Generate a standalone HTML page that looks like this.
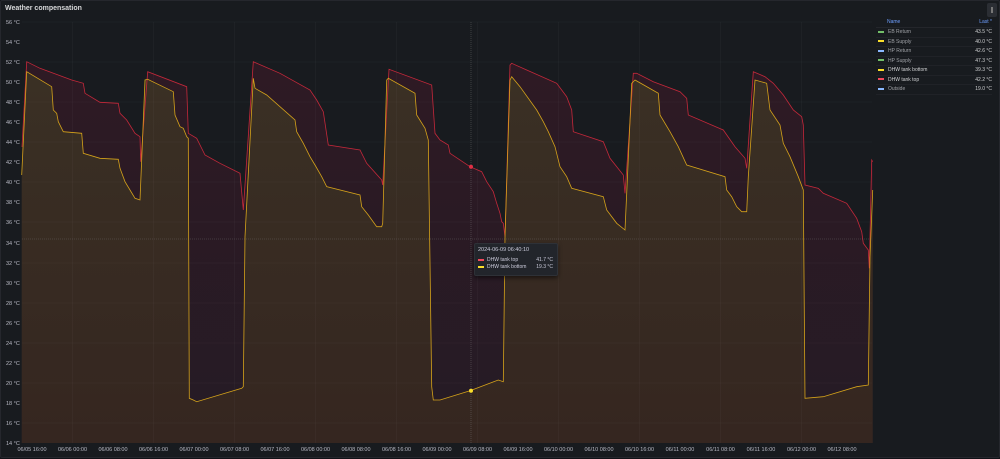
<!DOCTYPE html>
<html><head><meta charset="utf-8">
<style>
html,body{margin:0;padding:0;background:#111217;}
body{width:1000px;height:459px;overflow:hidden;font-family:"Liberation Sans",sans-serif;}
.panel{position:absolute;left:0;top:0;width:998px;height:456px;background:#181b1f;border:1px solid #25272d;border-radius:2px;}
.title{position:absolute;left:5px;top:5px;font-size:7px;color:#d8d9da;font-weight:bold;}
.menu{position:absolute;left:987px;top:3px;width:10px;height:14px;background:#2b2e34;border-radius:2px;}
.menu:after{content:"";position:absolute;left:4px;top:4px;width:2px;height:6px;background:#777;}
.leg{position:absolute;left:876px;top:19px;width:116px;font-size:5px;color:#9fa1a6;}
.leg .h{display:flex;justify-content:space-between;color:#6e9fff;height:8px;border-bottom:1px solid #24262b;padding-left:11px;}
.leg .r{display:flex;justify-content:space-between;height:8.5px;line-height:8.5px;border-bottom:1px solid #202227;}
.leg .r span:last-child{color:#d0d1d3;}
.sw{display:inline-block;width:6px;height:2px;margin:0 4px 0 2px;vertical-align:middle;}
.tt{position:absolute;left:474px;top:243px;width:82px;height:31px;background:#22252b;border:1px solid #2e3137;border-radius:2px;font-size:5px;color:#ccccdc;box-shadow:0 2px 4px #0008;}
.tt div{position:absolute;white-space:nowrap;}
</style></head><body>
<div class="panel"></div>
<div class="title">Weather compensation</div>
<div class="menu"></div>
<svg style="position:absolute;left:0;top:0" width="1000" height="459">
<defs>
<linearGradient id="gr" x1="0" y1="0" x2="0" y2="1"><stop offset="0" stop-color="#2e1a24"/><stop offset="1" stop-color="#251b25"/></linearGradient>
<linearGradient id="gy" x1="0" y1="0" x2="0" y2="1"><stop offset="0" stop-color="#3a3024"/><stop offset="1" stop-color="#352620"/></linearGradient>
</defs>
<g font-size="5.5" fill="#b8b9c4" font-family="Liberation Sans, sans-serif">
<text x="6" y="24">56 °C</text><text x="6" y="44">54 °C</text><text x="6" y="64">52 °C</text><text x="6" y="84">50 °C</text><text x="6" y="104">48 °C</text><text x="6" y="124">46 °C</text><text x="6" y="144">44 °C</text><text x="6" y="164">42 °C</text><text x="6" y="184">40 °C</text><text x="6" y="204">38 °C</text><text x="6" y="224">36 °C</text><text x="6" y="245">34 °C</text><text x="6" y="265">32 °C</text><text x="6" y="285">30 °C</text><text x="6" y="305">28 °C</text><text x="6" y="325">26 °C</text><text x="6" y="345">24 °C</text><text x="6" y="365">22 °C</text><text x="6" y="385">20 °C</text><text x="6" y="405">18 °C</text><text x="6" y="425">16 °C</text><text x="6" y="445">14 °C</text>
</g>
<g font-size="5.5" fill="#b8b9c4" text-anchor="middle" font-family="Liberation Sans, sans-serif">
<text x="32" y="451">06/05 16:00</text><text x="72.5" y="451">06/06 00:00</text><text x="113" y="451">06/06 08:00</text><text x="153.5" y="451">06/06 16:00</text><text x="194" y="451">06/07 00:00</text><text x="234.5" y="451">06/07 08:00</text><text x="275" y="451">06/07 16:00</text><text x="315.5" y="451">06/08 00:00</text><text x="356" y="451">06/08 08:00</text><text x="396.5" y="451">06/08 16:00</text><text x="437" y="451">06/09 00:00</text><text x="477.5" y="451">06/09 08:00</text><text x="518" y="451">06/09 16:00</text><text x="558.5" y="451">06/10 00:00</text><text x="599" y="451">06/10 08:00</text><text x="639.5" y="451">06/10 16:00</text><text x="680" y="451">06/11 00:00</text><text x="720.5" y="451">06/11 08:00</text><text x="761" y="451">06/11 16:00</text><text x="801.5" y="451">06/12 00:00</text><text x="842" y="451">06/12 08:00</text>
</g>
<polygon fill="url(#gr)" points="22,147 26.7,61.7 40,68.3 71.7,80 83.3,83.3 85,93.3 100,102.3 118.3,103.3 120,113.3 126.7,120 135,133.3 140,136.7 140.7,161.7 147.7,71.7 186.7,86.7 188.3,133.3 196.7,138.3 205,155 220,163.3 240,173.3 243.3,210 253.3,61.7 280,73.3 310,90 316.7,100 323.3,111.7 328.3,145 360,150 366.7,163.3 381.7,180 382.7,185 389,69.3 431.7,85 435,133.3 440,140 448.3,145 450,153.3 470,166.7 481.7,171.7 486.7,181.7 493.3,191.7 496.7,203.3 500,213.3 501.7,221.7 503.3,223.3 505,236.7 510,65 511.7,63.3 526.7,70 556.7,83.3 566.7,96.7 571.7,110 573.3,131.7 603.3,141.7 610,158.3 623.3,175 625,193.3 633.3,73.3 636.7,73.3 653.3,81.7 680,91.7 686.7,98.3 688.3,115 723.3,130 735,146.7 745,158.3 746.7,168.3 753.3,71.7 765,76.7 773.3,83.3 783.3,95 793.3,110 801.7,116.7 803.3,125 805,185 818.3,188.3 823.3,193.3 846.7,203.3 856.7,218.3 861.7,231.7 863.3,243.3 868.3,250 869.3,268.3 871.7,160 872.7,161.7 872.7,443 22,443"/>
<polygon fill="url(#gy)" points="21.7,175 26.7,71.7 51.7,86.7 53.3,110 56.7,113.3 58.3,121.7 63.3,131.7 81.7,133.3 83.3,153.3 100,158.3 118.3,159.3 120,168.3 125,181.7 130,190 135,198.3 140,200 145,80 147.7,79.3 173.3,91.7 175,115 180,126.7 183.3,128.3 186.7,136.7 188.3,138.3 189.3,398.3 193.3,400 196.7,401.7 241.7,388.3 243.3,386.7 245,236.7 253.3,78.3 255,88.3 266.7,95 295,120 296.7,131.7 303.3,143.3 310,156.7 315,165 321.7,176.7 326.7,186.7 360,195 361.7,206.7 368.3,215 376.7,226.7 381.7,226.7 382.7,223.3 386.7,80 388.3,78.3 415,93.3 416.7,115 425,128.3 428.3,140 431.7,386.7 433.3,400 440,400 470,390.7 498.3,380 503.3,381.7 505,236.7 510,80 511.7,76.7 520,86.7 536.7,110 543.3,121.7 548.3,131.7 555,146.7 560,166.7 566.7,176.7 571.7,188.3 603.3,196.7 606.7,210 616.7,223.3 625,230 626.7,193.3 631.7,83.3 635,80 658.3,93.3 660,115 670,131.7 678.3,146.7 686.7,165 725,176.7 726.7,190 731.7,196.7 736.7,206.7 741.7,211.7 746.7,211.7 748.3,176.7 755,80 766.7,83.3 770,110 780,125 783.3,143.3 790,156.7 798.3,176.7 803.3,190 805,398.3 823.3,396.7 856.7,386.7 868.3,385 870,256.7 872.7,190 872.7,443 21.7,443"/>
<g stroke="#ffffff" stroke-opacity="0.05" stroke-width="0.6">
<line x1="22" y1="22" x2="872" y2="22"/><line x1="22" y1="62" x2="872" y2="62"/><line x1="22" y1="102" x2="872" y2="102"/><line x1="22" y1="142" x2="872" y2="142"/><line x1="22" y1="182" x2="872" y2="182"/><line x1="22" y1="222" x2="872" y2="222"/><line x1="22" y1="263" x2="872" y2="263"/><line x1="22" y1="303" x2="872" y2="303"/><line x1="22" y1="343" x2="872" y2="343"/><line x1="22" y1="383" x2="872" y2="383"/><line x1="22" y1="423" x2="872" y2="423"/>
<line x1="72.5" y1="22" x2="72.5" y2="443"/><line x1="153.5" y1="22" x2="153.5" y2="443"/><line x1="234.5" y1="22" x2="234.5" y2="443"/><line x1="315.5" y1="22" x2="315.5" y2="443"/><line x1="396.5" y1="22" x2="396.5" y2="443"/><line x1="477.5" y1="22" x2="477.5" y2="443"/><line x1="558.5" y1="22" x2="558.5" y2="443"/><line x1="639.5" y1="22" x2="639.5" y2="443"/><line x1="720.5" y1="22" x2="720.5" y2="443"/><line x1="801.5" y1="22" x2="801.5" y2="443"/>
</g>
<polyline fill="none" stroke="#c4283a" stroke-width="0.8" points="22,147 26.7,61.7 40,68.3 71.7,80 83.3,83.3 85,93.3 100,102.3 118.3,103.3 120,113.3 126.7,120 135,133.3 140,136.7 140.7,161.7 147.7,71.7 186.7,86.7 188.3,133.3 196.7,138.3 205,155 220,163.3 240,173.3 243.3,210 253.3,61.7 280,73.3 310,90 316.7,100 323.3,111.7 328.3,145 360,150 366.7,163.3 381.7,180 382.7,185 389,69.3 431.7,85 435,133.3 440,140 448.3,145 450,153.3 470,166.7 481.7,171.7 486.7,181.7 493.3,191.7 496.7,203.3 500,213.3 501.7,221.7 503.3,223.3 505,236.7 510,65 511.7,63.3 526.7,70 556.7,83.3 566.7,96.7 571.7,110 573.3,131.7 603.3,141.7 610,158.3 623.3,175 625,193.3 633.3,73.3 636.7,73.3 653.3,81.7 680,91.7 686.7,98.3 688.3,115 723.3,130 735,146.7 745,158.3 746.7,168.3 753.3,71.7 765,76.7 773.3,83.3 783.3,95 793.3,110 801.7,116.7 803.3,125 805,185 818.3,188.3 823.3,193.3 846.7,203.3 856.7,218.3 861.7,231.7 863.3,243.3 868.3,250 869.3,268.3 871.7,160 872.7,161.7"/>
<polyline fill="none" stroke="#d4a21a" stroke-width="0.8" points="21.7,175 26.7,71.7 51.7,86.7 53.3,110 56.7,113.3 58.3,121.7 63.3,131.7 81.7,133.3 83.3,153.3 100,158.3 118.3,159.3 120,168.3 125,181.7 130,190 135,198.3 140,200 145,80 147.7,79.3 173.3,91.7 175,115 180,126.7 183.3,128.3 186.7,136.7 188.3,138.3 189.3,398.3 193.3,400 196.7,401.7 241.7,388.3 243.3,386.7 245,236.7 253.3,78.3 255,88.3 266.7,95 295,120 296.7,131.7 303.3,143.3 310,156.7 315,165 321.7,176.7 326.7,186.7 360,195 361.7,206.7 368.3,215 376.7,226.7 381.7,226.7 382.7,223.3 386.7,80 388.3,78.3 415,93.3 416.7,115 425,128.3 428.3,140 431.7,386.7 433.3,400 440,400 470,390.7 498.3,380 503.3,381.7 505,236.7 510,80 511.7,76.7 520,86.7 536.7,110 543.3,121.7 548.3,131.7 555,146.7 560,166.7 566.7,176.7 571.7,188.3 603.3,196.7 606.7,210 616.7,223.3 625,230 626.7,193.3 631.7,83.3 635,80 658.3,93.3 660,115 670,131.7 678.3,146.7 686.7,165 725,176.7 726.7,190 731.7,196.7 736.7,206.7 741.7,211.7 746.7,211.7 748.3,176.7 755,80 766.7,83.3 770,110 780,125 783.3,143.3 790,156.7 798.3,176.7 803.3,190 805,398.3 823.3,396.7 856.7,386.7 868.3,385 870,256.7 872.7,190"/>
<line x1="22" y1="239" x2="872" y2="239" stroke="#8a8a8a" stroke-opacity="0.55" stroke-width="0.6" stroke-dasharray="1,1"/>
<line x1="471" y1="22" x2="471" y2="443" stroke="#8a8a8a" stroke-opacity="0.55" stroke-width="0.6" stroke-dasharray="1,1"/>
<circle cx="471" cy="166.7" r="2" fill="#e02f44"/>
<circle cx="471" cy="390.7" r="2" fill="#fade2a"/>
</svg>
<div class="leg">
<div class="h"><span>Name</span><span>Last *</span></div>
<div class="r"><span><i class="sw" style="background:#73bf69"></i>EB Return</span><span>43.5 °C</span></div>
<div class="r"><span><i class="sw" style="background:#fade2a"></i>EB Supply</span><span>40.0 °C</span></div>
<div class="r"><span><i class="sw" style="background:#8ab8ff"></i>HP Return</span><span>42.6 °C</span></div>
<div class="r"><span><i class="sw" style="background:#73bf69"></i>HP Supply</span><span>47.3 °C</span></div>
<div class="r"><span><i class="sw" style="background:#fade2a"></i><b style="font-weight:normal;color:#d0d1d3">DHW tank bottom</b></span><span>39.3 °C</span></div>
<div class="r"><span><i class="sw" style="background:#f2495c"></i><b style="font-weight:normal;color:#d0d1d3">DHW tank top</b></span><span>42.2 °C</span></div>
<div class="r"><span><i class="sw" style="background:#8ab8ff"></i>Outside</span><span>19.0 °C</span></div>
</div>
<div class="tt">
<div style="left:3px;top:3px;font-size:5.5px">2024-06-09 06:40:10</div>
<div style="left:3px;top:13px"><i class="sw" style="background:#f2495c;margin:0 3px 0 0"></i>DHW tank top</div>
<div style="right:4px;top:13px">41.7 °C</div>
<div style="left:3px;top:20px"><i class="sw" style="background:#fade2a;margin:0 3px 0 0"></i>DHW tank bottom</div>
<div style="right:4px;top:20px">19.3 °C</div>
</div>
</body></html>
